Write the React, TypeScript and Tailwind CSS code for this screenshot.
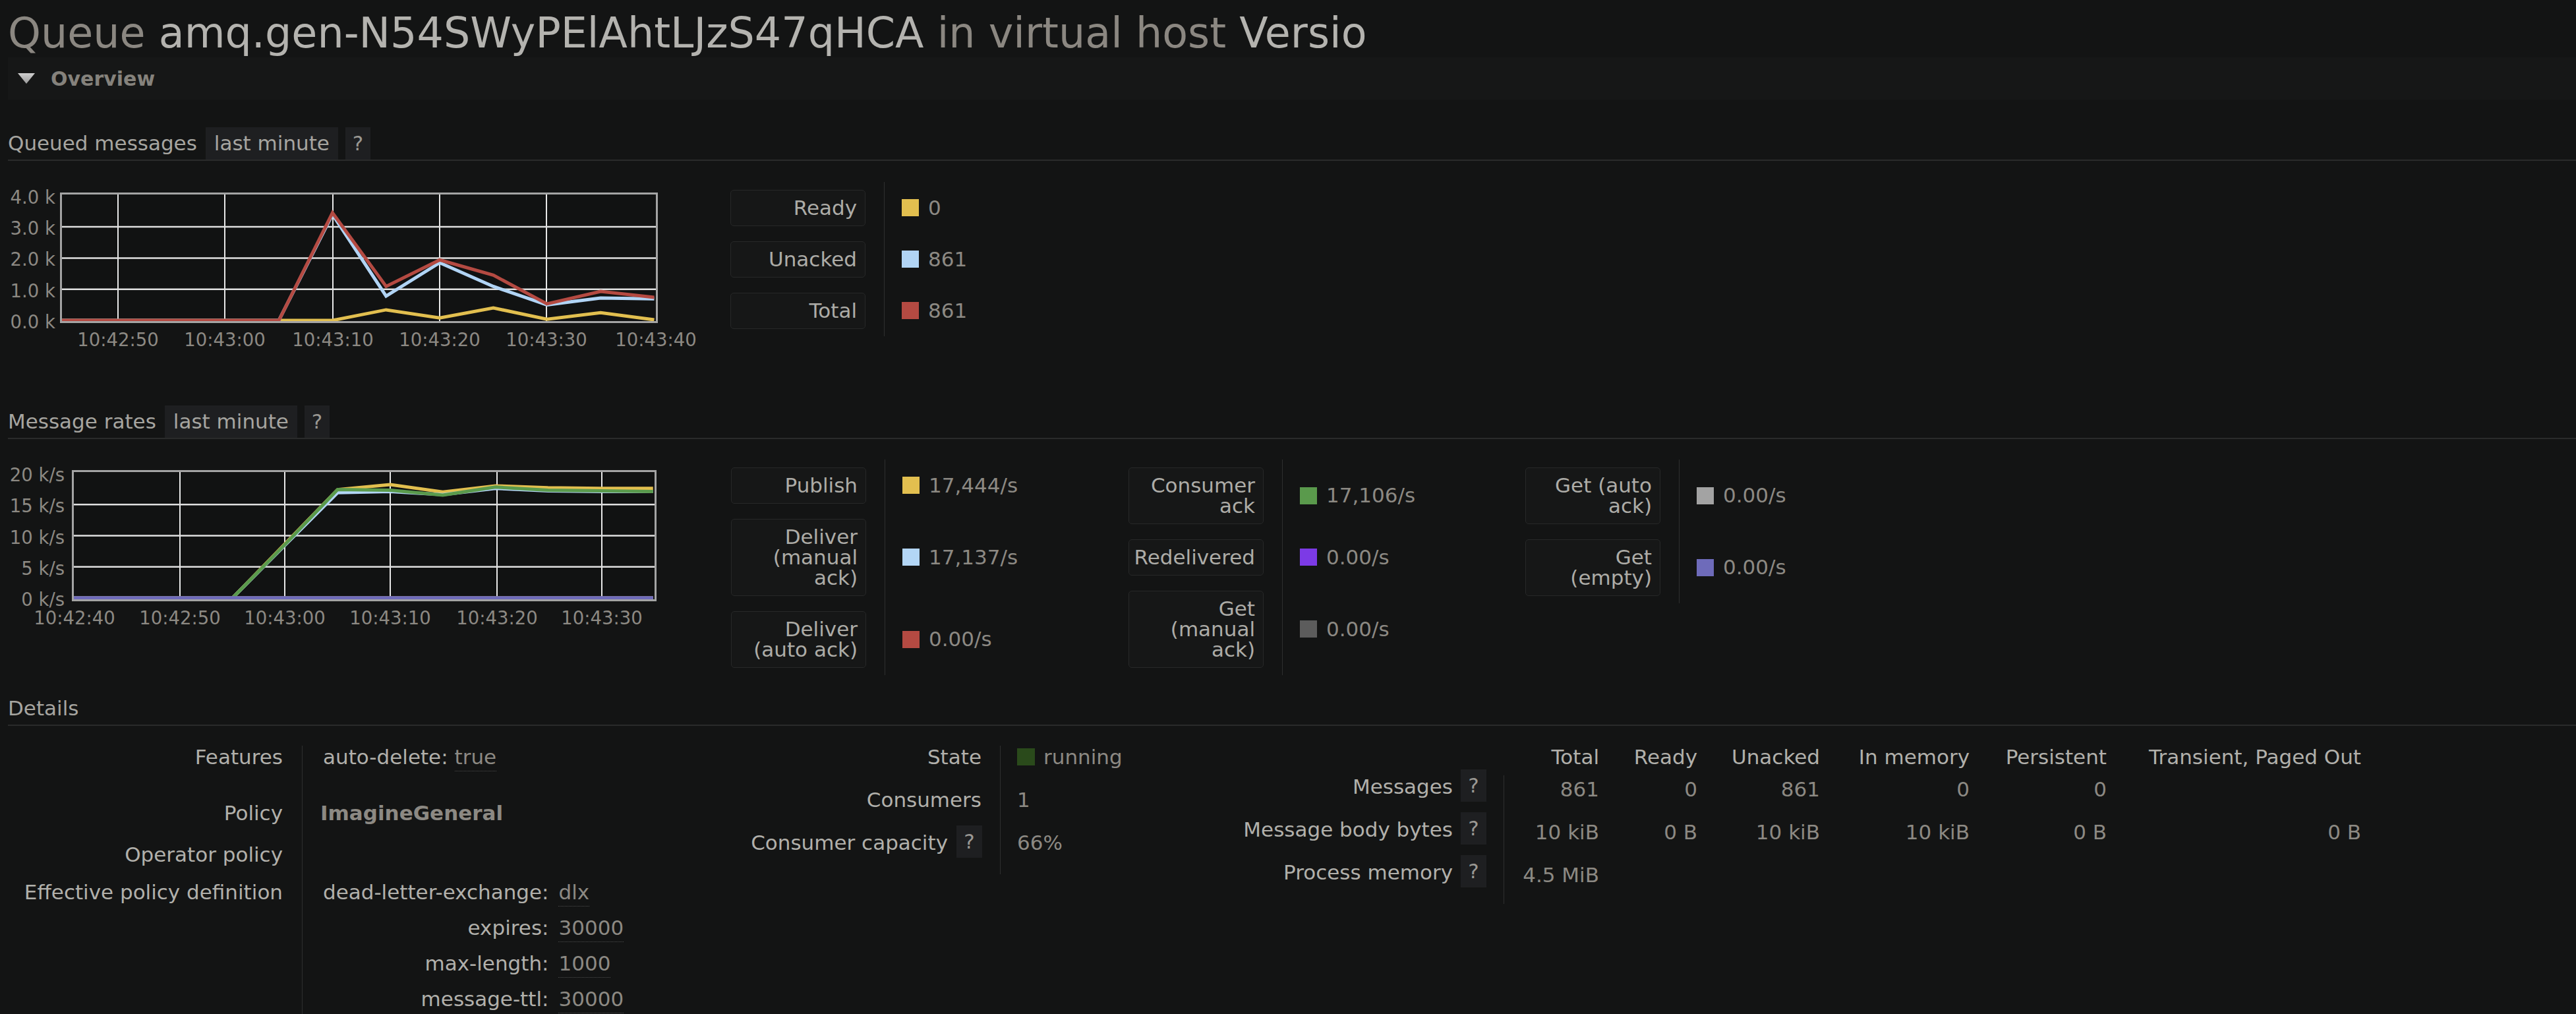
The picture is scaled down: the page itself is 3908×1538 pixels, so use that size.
import type { ReactNode } from 'react'

type LegendItem = { lines: string[]; swatch: string; value: string }

type Series = { color: string; values: number[] }

type ChartSpec = {
  id: string
  width: number
  height: number
  rect: { x: number; y: number; w: number; h: number }
  times: number[]
  tx: (t: number) => number
  vy: (v: number) => number
  vGrid: number[]
  hGrid: number[]
  xLabels: [number, string][]
  xLabelY: number
  yLabels: [number, string][]
  yLabelRight: number
  series: Series[]
}

const queuedLegend: LegendItem[] = [
  { lines: ['Ready'], swatch: 'bg-[#e2bf4f]', value: '0' },
  { lines: ['Unacked'], swatch: 'bg-[#b1d4f5]', value: '861' },
  { lines: ['Total'], swatch: 'bg-[#b44a42]', value: '861' },
]

const rateColumns: LegendItem[][] = [
  [
    { lines: ['Publish'], swatch: 'bg-[#e2bf4f]', value: '17,444/s' },
    { lines: ['Deliver', '(manual', 'ack)'], swatch: 'bg-[#b3d6f6]', value: '17,137/s' },
    { lines: ['Deliver', '(auto ack)'], swatch: 'bg-[#b44a42]', value: '0.00/s' },
  ],
  [
    { lines: ['Consumer', 'ack'], swatch: 'bg-[#5a9a4c]', value: '17,106/s' },
    { lines: ['Redelivered'], swatch: 'bg-[#7c3ae6]', value: '0.00/s' },
    { lines: ['Get', '(manual', 'ack)'], swatch: 'bg-[#5c5c5c]', value: '0.00/s' },
  ],
  [
    { lines: ['Get (auto', 'ack)'], swatch: 'bg-[#a3a3a3]', value: '0.00/s' },
    { lines: ['Get', '(empty)'], swatch: 'bg-[#6e6bba]', value: '0.00/s' },
  ],
]

const queuedChart: ChartSpec = {
  id: 'queued',
  width: 1096,
  height: 260,
  rect: { x: 80.5, y: 17.5, w: 904, h: 195 },
  times: [-6, 0, 5, 10, 15, 20, 25, 30, 35, 40, 45, 50],
  tx: (t) => 167 + t * 16.27,
  vy: (v) => 210 - v * 47.3,
  vGrid: [167, 329, 493, 655, 817],
  hGrid: [1, 2, 3],
  xLabels: [
    [167, '10:42:50'],
    [329, '10:43:00'],
    [493, '10:43:10'],
    [655, '10:43:20'],
    [817, '10:43:30'],
    [983, '10:43:40'],
  ],
  xLabelY: 239,
  yLabels: [
    [4, '4.0 k'],
    [3, '3.0 k'],
    [2, '2.0 k'],
    [1, '1.0 k'],
    [0, '0.0 k'],
  ],
  yLabelRight: 72,
  series: [
    { color: '#e2bf4f', values: [0, 0, 0, 0, 0, 0, 0.34, 0.08, 0.4, 0.04, 0.25, 0.02] },
    { color: '#b1d4f5', values: [0, 0, 0, 0, 0, 3.4, 0.78, 1.85, 1.09, 0.5, 0.72, 0.69] },
    { color: '#b44a42', values: [0, 0, 0, 0, 0, 3.45, 1.09, 1.94, 1.45, 0.53, 0.93, 0.74] },
  ],
}

const zeros = [0, 0, 0, 0, 0, 0, 0, 0, 0, 0, 0]

const ratesChart: ChartSpec = {
  id: 'rates',
  width: 1097,
  height: 260,
  rect: { x: 98.5, y: 17.5, w: 884, h: 196 },
  times: [-11, 0, 5, 10, 15, 20, 25, 30, 35, 40, 45],
  tx: (t) => 261 + t * 15.95,
  vy: (v) => 210 - v * 9.45,
  vGrid: [261, 420, 580, 742, 901],
  hGrid: [5, 10, 15],
  xLabels: [
    [101, '10:42:40'],
    [261, '10:42:50'],
    [420, '10:43:00'],
    [580, '10:43:10'],
    [742, '10:43:20'],
    [901, '10:43:30'],
  ],
  xLabelY: 240,
  yLabels: [
    [20, '20 k/s'],
    [15, '15 k/s'],
    [10, '10 k/s'],
    [5, '5 k/s'],
    [0, '0 k/s'],
  ],
  yLabelRight: 86,
  series: [
    { color: '#e2bf4f', values: [0, 0, 0, 8.7, 17.4, 18.2, 17.0, 18.0, 17.7, 17.6, 17.6] },
    { color: '#b3d6f6', values: [0, 0, 0, 8.5, 16.9, 17.1, 16.6, 17.6, 17.2, 17.1, 17.1] },
    { color: '#b44a42', values: zeros },
    { color: '#5a9a4c', values: [0, 0, 0, 8.6, 17.4, 17.3, 16.5, 17.8, 17.3, 17.2, 17.1] },
    { color: '#7c3ae6', values: zeros },
    { color: '#5c5c5c', values: zeros },
    { color: '#a3a3a3', values: zeros },
    { color: '#6e6bba', values: zeros },
  ],
}

function Chart({ spec }: { spec: ChartSpec }) {
  const { rect } = spec
  const top = rect.y
  const bottom = rect.y + rect.h
  const left = rect.x
  const right = rect.x + rect.w

  return (
    <svg width={spec.width} height={spec.height} className="block overflow-visible">
      <defs>
        <clipPath id={`clip-${spec.id}`}>
          <rect x={left + 1.5} y={top + 1.5} width={rect.w - 3} height={rect.h - 3} />
        </clipPath>
      </defs>
      <rect x={left} y={top} width={rect.w} height={rect.h} fill="#111212" />
      {spec.vGrid.map((x) => (
        <line key={`v${x}`} x1={x} x2={x} y1={top} y2={bottom} stroke="#e8e8e8" strokeWidth={2} />
      ))}
      {spec.hGrid.map((v) => (
        <line key={`h${v}`} x1={left} x2={right} y1={spec.vy(v)} y2={spec.vy(v)} stroke="#e0e0e0" strokeWidth={2.5} />
      ))}
      <g clipPath={`url(#clip-${spec.id})`}>
        {spec.series.map((s, i) => (
          <polyline
            key={i}
            fill="none"
            stroke={s.color}
            strokeWidth={5}
            strokeLinejoin="miter"
            points={s.values.map((v, j) => `${spec.tx(spec.times[j])},${spec.vy(v)}`).join(' ')}
          />
        ))}
      </g>
      <rect x={left} y={top} width={rect.w} height={rect.h} fill="none" stroke="#a4a4a4" strokeWidth={3} />
      <g fontFamily="DejaVu Sans" fontSize={27.5} fill="#8c8983">
        {spec.yLabels.map(([v, label]) => (
          <text key={label} x={spec.yLabelRight} y={spec.vy(v) + 2} textAnchor="end" dominantBaseline="central">
            {label}
          </text>
        ))}
        {spec.xLabels.map(([x, label]) => (
          <text key={label} x={x} y={spec.xLabelY} textAnchor="middle" dominantBaseline="central">
            {label}
          </text>
        ))}
      </g>
    </svg>
  )
}

function LegendTable({ items, className }: { items: LegendItem[]; className: string }) {
  return (
    <table className={`shrink-0 self-start border-collapse ${className}`}>
      <tbody>
        {items.map((item) => (
          <tr key={item.lines.join(' ')}>
            <th className="w-[233px] py-[11.5px] pr-[28px] align-middle font-normal">
              <div className="w-[205px] rounded-[5px] border border-[#272828] bg-[#161717] py-[11px] pl-[6px] pr-[12px] text-right leading-[31px] text-[#adaca7]">
                {item.lines.map((line) => (
                  <div key={line} className="whitespace-nowrap">
                    {line}
                  </div>
                ))}
              </div>
            </th>
            <td className="border-l border-[#2e2f2f] pl-[26px] align-middle">
              <div className="flex items-center gap-[14px] whitespace-nowrap text-[#8c8983]">
                <span className={`h-[26px] w-[26px] shrink-0 ${item.swatch}`} />
                {item.value}
              </div>
            </td>
          </tr>
        ))}
      </tbody>
    </table>
  )
}

function SectionHeader({ title, tab }: { title: string; tab?: boolean }) {
  return (
    <div className="flex h-[51px] items-stretch border-b-2 border-[#2a2b2b]">
      <span className="leading-[49px] text-[#a6a5a0]">{title}</span>
      {tab ? (
        <>
          <span className="ml-[13px] bg-[#1e1f21] px-[13px] leading-[49px] text-[#a6a5a0]">last minute</span>
          <span className="ml-[11px] w-[38px] bg-[#1e1f21] text-center leading-[49px] text-[#9a9893]">?</span>
        </>
      ) : null}
    </div>
  )
}

function HelpBox() {
  return <span className="-mt-[9px] h-[49px] w-[39px] shrink-0 bg-[#1e1f21] text-center leading-[49px] text-[#9a9893]">?</span>
}

function Dotted({ children }: { children: ReactNode }) {
  return <span className="border-b border-dotted border-[#4d4d4d] pb-[3px] text-[#8c8983]">{children}</span>
}

function Label({ children, className }: { children: ReactNode; className: string }) {
  return <div className={`pr-[29px] text-right text-[#b1b0ab] ${className}`}>{children}</div>
}

const sep = 'border-l border-[#2e2f2f]'

export default function App() {
  return (
    <div className="h-screen w-full overflow-hidden bg-[#131414] pl-[12px] pt-[18px] font-['DejaVu_Sans',sans-serif] text-[31px] text-[#b1b0ab]">
      <h1 className="h-[64px] whitespace-nowrap text-[63.5px] font-normal leading-[64px]">
        <span className="text-[#8b8781]">Queue </span>
        <span className="text-[#b4b3af]">amq.gen-N54SWyPElAhtLJzS47qHCA</span>
        <span className="text-[#8b8781]"> in virtual host </span>
        <span className="text-[#b4b3af]">Versio</span>
      </h1>

      <div className="mt-[5px] flex h-[64px] items-center bg-[#161717] pl-[15px]">
        <svg width="26" height="16" viewBox="0 0 26 16" aria-hidden="true">
          <defs>
            <linearGradient id="tri" x1="0" y1="0" x2="0" y2="1">
              <stop offset="0" stopColor="#cfcfcf" />
              <stop offset="1" stopColor="#9a9a9a" />
            </linearGradient>
          </defs>
          <polygon points="0,0 26,0 13,16" fill="url(#tri)" />
        </svg>
        <span className="ml-[24px] text-[30px] font-bold text-[#85827c]">Overview</span>
      </div>

      <div className="mt-[42px]">
        <SectionHeader title="Queued messages" tab />
      </div>
      <div className="mt-[32px] flex items-start">
        <div className="h-[234px] w-[1096px] shrink-0">
          <Chart spec={queuedChart} />
        </div>
        <LegendTable items={queuedLegend} className="w-[603px]" />
      </div>

      <div className="mt-[105px]">
        <SectionHeader title="Message rates" tab />
      </div>
      <div className="mt-[31px] flex items-start">
        <div className="w-[1097px] shrink-0">
          <Chart spec={ratesChart} />
        </div>
        <LegendTable items={rateColumns[0]} className="w-[603px]" />
        <LegendTable items={rateColumns[1]} className="w-[602px]" />
        <LegendTable items={rateColumns[2]} className="w-[600px]" />
      </div>

      <div className="mt-[26px]">
        <SectionHeader title="Details" />
      </div>

      <div className="mt-[30px] flex items-start leading-[34px]">
        <div className="grid w-[1088px] shrink-0 grid-cols-[446px_642px]">
          <Label className="h-[85px]">Features</Label>
          <div className={`h-[85px] pl-[31px] ${sep}`}>
            <span className="text-[#b1b0ab]">auto-delete:</span> <Dotted>true</Dotted>
          </div>

          <Label className="h-[63px]">Policy</Label>
          <div className={`h-[63px] pl-[27px] ${sep}`}>
            <span className="font-bold text-[#8c8983]">ImagineGeneral</span>
          </div>

          <Label className="h-[57px]">Operator policy</Label>
          <div className={`h-[57px] ${sep}`} />

          <Label className="h-[240px]">Effective policy definition</Label>
          <div className={`h-[240px] pl-[31px] ${sep}`}>
            <div className="grid auto-rows-[54px] grid-cols-[auto_auto] justify-start gap-x-[15px]">
              <div className="text-right text-[#b1b0ab]">dead-letter-exchange:</div>
              <div>
                <Dotted>dlx</Dotted>
              </div>
              <div className="text-right text-[#b1b0ab]">expires:</div>
              <div>
                <Dotted>30000</Dotted>
              </div>
              <div className="text-right text-[#b1b0ab]">max-length:</div>
              <div>
                <Dotted>1000</Dotted>
              </div>
              <div className="text-right text-[#b1b0ab]">message-ttl:</div>
              <div>
                <Dotted>30000</Dotted>
              </div>
            </div>
          </div>
        </div>

        <div className="grid w-[700px] shrink-0 auto-rows-[65px] grid-cols-[417px_283px]">
          <div className="pr-[28px] text-right text-[#b1b0ab]">State</div>
          <div className={`pl-[25px] ${sep}`}>
            <div className="flex h-[34px] items-center gap-[13px] text-[#8c8983]">
              <span className="h-[26px] w-[27px] bg-[#2a4a1b]" />
              running
            </div>
          </div>

          <div className="pr-[28px] text-right text-[#b1b0ab]">Consumers</div>
          <div className={`pl-[25px] text-[#8c8983] ${sep}`}>1</div>

          <div className="flex items-start justify-end gap-[13px] pr-[27px] text-[#b1b0ab]">
            <span>Consumer capacity</span>
            <HelpBox />
          </div>
          <div className={`pl-[25px] text-[#8c8983] ${sep}`}>66%</div>
        </div>

        <div className="grid shrink-0 grid-cols-[481px_145px_149px_186px_227px_208px_386px] grid-rows-[45px_65px_65px_65px]">
          <div />
          {['Total', 'Ready', 'Unacked', 'In memory', 'Persistent', 'Transient, Paged Out'].map((h) => (
            <div key={h} className="whitespace-nowrap text-right text-[#b1b0ab]">
              {h}
            </div>
          ))}

          <div className="flex items-start justify-end gap-[12px] pr-[26px] text-[#b1b0ab]">
            <span>Messages</span>
            <HelpBox />
          </div>
          <div className={`pt-[4px] text-right text-[#8c8983] ${sep}`}>861</div>
          <div className="pt-[4px] text-right text-[#8c8983]">0</div>
          <div className="pt-[4px] text-right text-[#8c8983]">861</div>
          <div className="pt-[4px] text-right text-[#8c8983]">0</div>
          <div className="pt-[4px] text-right text-[#8c8983]">0</div>
          <div />

          <div className="flex items-start justify-end gap-[12px] whitespace-nowrap pr-[26px] text-[#b1b0ab]">
            <span>Message body bytes</span>
            <HelpBox />
          </div>
          <div className={`pt-[4px] text-right text-[#8c8983] ${sep}`}>10 kiB</div>
          <div className="pt-[4px] text-right text-[#8c8983]">0 B</div>
          <div className="pt-[4px] text-right text-[#8c8983]">10 kiB</div>
          <div className="pt-[4px] text-right text-[#8c8983]">10 kiB</div>
          <div className="pt-[4px] text-right text-[#8c8983]">0 B</div>
          <div className="pt-[4px] text-right text-[#8c8983]">0 B</div>

          <div className="flex items-start justify-end gap-[12px] whitespace-nowrap pr-[26px] text-[#b1b0ab]">
            <span>Process memory</span>
            <HelpBox />
          </div>
          <div className={`whitespace-nowrap pt-[4px] text-right text-[#8c8983] ${sep}`}>4.5 MiB</div>
        </div>
      </div>
    </div>
  )
}
